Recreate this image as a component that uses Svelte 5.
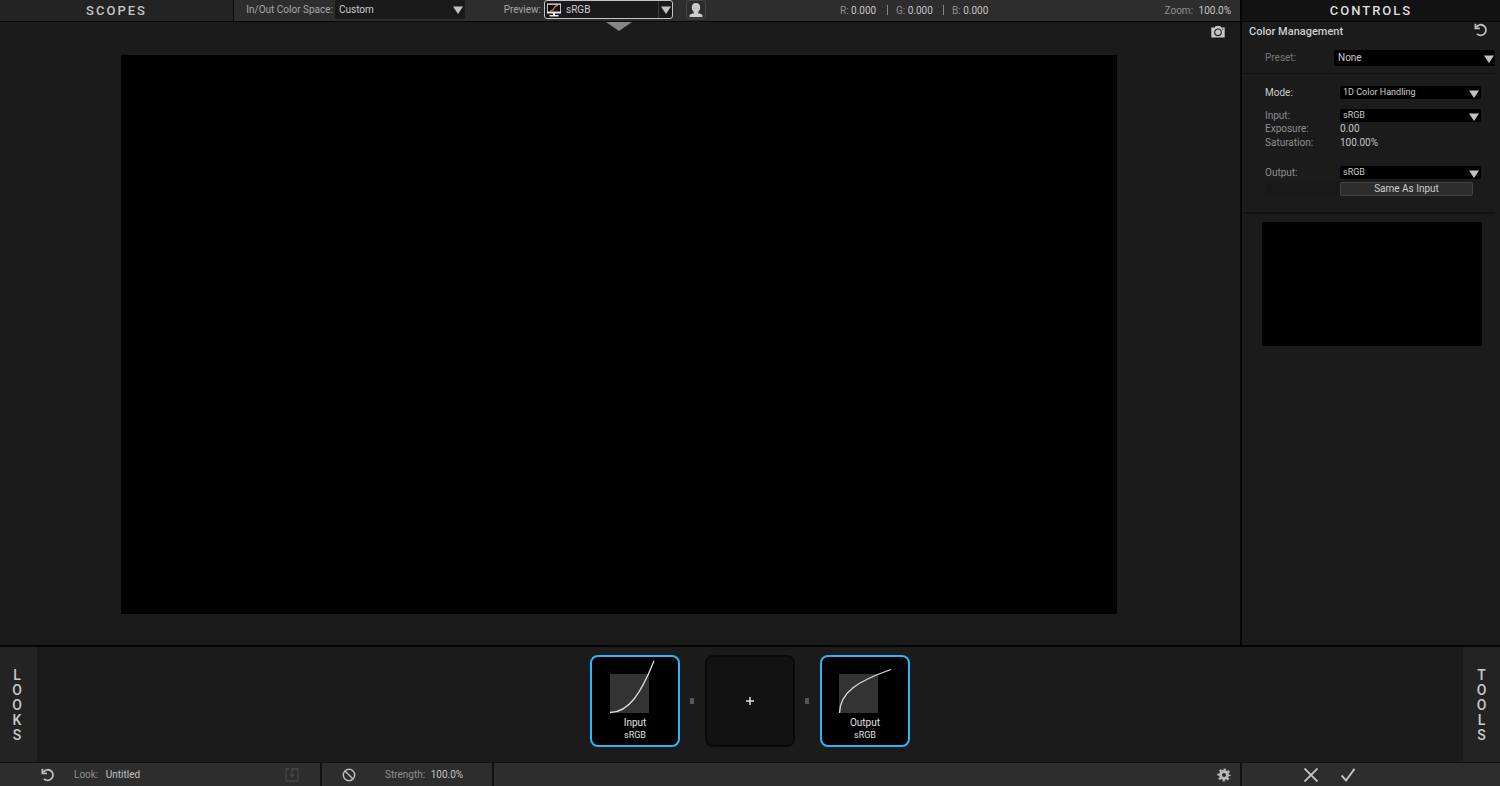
<script lang="ts">
  const colorSpaces = ['Custom', 'sRGB', 'Linear'];
  const profiles = ['sRGB', 'Rec. 709', 'Linear'];
  const modes = ['1D Color Handling', 'OCIO', 'ICC'];

  let colorSpace = $state('Custom');
  let preview = $state('sRGB');
  let preset = $state('None');
  let mode = $state('1D Color Handling');
  let input = $state('sRGB');
  let output = $state('sRGB');

  const pixel = [
    { name: 'R', value: '0.000' },
    { name: 'G', value: '0.000' },
    { name: 'B', value: '0.000' }
  ];

  const sameAsInput = () => {
    output = input;
  };
</script>

{#snippet arrow()}
  <svg class="arrow" viewBox="0 0 10 8" aria-hidden="true"><path d="M0 0.5h10L5 8z" /></svg>
{/snippet}

{#snippet resetIcon()}
  <svg class="reset-icon" viewBox="0 0 14 14" aria-hidden="true">
    <path d="M2.2 4.2A5.3 5.3 0 1 1 3 10.9" fill="none" stroke="currentColor" stroke-width="1.8" />
    <path d="M0.5 0.8v5.400h5.400v-1.700H2.300V0.8z" fill="currentColor" />
  </svg>
{/snippet}

<div class="app">
  <div class="upper">
    <main class="stage">
      <header class="topbar">
        <button class="tab scopes">SCOPES</button>
        <label class="label wide" for="space">In/Out Color Space:</label>
        <div class="select space">
          <select id="space" bind:value={colorSpace}>
            {#each colorSpaces as item}<option>{item}</option>{/each}
          </select>
          {@render arrow()}
        </div>
        <label class="label" for="preview">Preview:</label>
        <div class="select preview">
          <svg class="monitor" viewBox="0 0 14 14" aria-hidden="true">
            <path d="M0 0.5h14v10H0z" fill="#e8e8e8" />
            <path d="M0.8 1.800h12.400v6.700H0.8z" fill="#0c0c0c" />
            <path d="M3 8C8.500 8 5.500 2.500 11 2.300" fill="none" stroke="#c08428" stroke-width="1.200" />
            <path d="M6 10h2v2h3.500v1.500h-9V12H6z" fill="#e8e8e8" />
          </svg>
          <select id="preview" bind:value={preview}>
            {#each profiles as item}<option>{item}</option>{/each}
          </select>
          {@render arrow()}
        </div>
        <button class="proof" aria-label="Soft proof">
          <svg viewBox="0 0 16 16" aria-hidden="true">
            <path
              d="M8 1c2.8 0 4.2 1.8 4.2 4.2 0 2-0.7 3.700-2 4.800v1.200c1.600 0.400 3.800 0.900 4.300 2v1.800h-13v-1.800c0.500-1.100 2.700-1.600 4.300-2V10c-1.300-1.100-2-2.800-2-4.800C3.800 2.800 5.200 1 8 1z"
              fill="#cfcfcf"
            />
            <path d="M4 4h8M4 6.500h8M6.500 1v9M9.500 1v9" stroke="#b4b4b4" stroke-width="0.5" />
          </svg>
        </button>
        <div class="readout">
          {#each pixel as channel}
            <span class="channel">{channel.name}: <b>{channel.value}</b></span>
          {/each}
        </div>
        <div class="zoom">Zoom: <b>100.0%</b></div>
      </header>

      <section class="viewer">
        <button class="drawer" aria-label="Show preview options">
          <svg viewBox="0 0 26 9" aria-hidden="true"><path d="M0 0h26L13 9z" fill="#868686" /></svg>
        </button>
        <button class="snapshot" aria-label="Snapshot">
          <svg viewBox="0 0 14 12" aria-hidden="true">
            <path d="M0.300 1.500H4L4.600 0h4.800l0.600 1.500h3.700V11.500H0.300z" fill="#c8c8c8" />
            <circle cx="7" cy="6.300" r="3.300" fill="#c8c8c8" stroke="#222" stroke-width="1.200" />
            <circle cx="11.800" cy="3.200" r="0.600" fill="#222" />
          </svg>
        </button>
        <div class="canvas"></div>
      </section>
    </main>

    <aside class="controls">
      <button class="tab open">CONTROLS</button>
      <div class="title">
        <h2>Color Management</h2>
        <button aria-label="Reset tool">{@render resetIcon()}</button>
      </div>
      <div class="preset">
        <label for="preset">Preset:</label>
        <div class="select dark">
          <select id="preset" bind:value={preset}>
            <option>None</option>
          </select>
          {@render arrow()}
        </div>
      </div>
      <div class="fields">
        <div class="row spaced">
          <label class="bright" for="mode">Mode:</label>
          <div class="select dark small">
            <select id="mode" bind:value={mode}>
              {#each modes as item}<option>{item}</option>{/each}
            </select>
            {@render arrow()}
          </div>
        </div>
        <div class="row">
          <label for="input">Input:</label>
          <div class="select dark small">
            <select id="input" bind:value={input}>
              {#each profiles as item}<option>{item}</option>{/each}
            </select>
            {@render arrow()}
          </div>
        </div>
        <div class="row plain"><span>Exposure:</span><b>0.00</b></div>
        <div class="row plain last"><span>Saturation:</span><b>100.00%</b></div>
        <div class="row">
          <label for="output">Output:</label>
          <div class="select dark small">
            <select id="output" bind:value={output}>
              {#each profiles as item}<option>{item}</option>{/each}
            </select>
            {@render arrow()}
          </div>
        </div>
        <div class="row action">
          <span class="blank"></span>
          <button onclick={sameAsInput}>Same As Input</button>
        </div>
      </div>
      <div class="thumb"></div>
    </aside>
  </div>

  <section class="chain">
    <button class="side" aria-label="Looks">
      {#each 'LOOKS' as letter}<span>{letter}</span>{/each}
    </button>
    <div class="nodes">
      <button class="node active">
        <svg viewBox="0 0 86 58" aria-hidden="true">
          <path d="M18 17h39v39H18z" fill="#333" />
          <path d="M18 55.500C37 55.500 49 36 62 4" fill="none" stroke="#ddd" stroke-width="1.300" />
        </svg>
        <span>Input</span>
        <small>sRGB</small>
      </button>
      <i></i>
      <button class="node add" aria-label="Add tool">
        <svg viewBox="0 0 8 8" aria-hidden="true"><path d="M4 0v8M0 4h8" stroke="#ddd" stroke-width="1.500" /></svg>
      </button>
      <i></i>
      <button class="node active">
        <svg viewBox="0 0 86 58" aria-hidden="true">
          <path d="M17 17h39v39H17z" fill="#333" />
          <path d="M17.500 56C18 35 36 24 69 12.500" fill="none" stroke="#ddd" stroke-width="1.300" />
        </svg>
        <span>Output</span>
        <small>sRGB</small>
      </button>
    </div>
    <button class="side" aria-label="Tools">
      {#each 'TOOLS' as letter}<span>{letter}</span>{/each}
    </button>
  </section>

  <footer class="bottombar">
    <div class="look">
      <button aria-label="Reset look">{@render resetIcon()}</button>
      <span class="look-name">Look: <b>Untitled</b></span>
      <button class="save" aria-label="Save look" disabled>
        <svg viewBox="0 0 14 14" aria-hidden="true">
          <path d="M4 1H1v12h12V1H7v7" fill="none" stroke="#444" stroke-width="1.300" />
          <path d="M4 6.500h6L7 10z" fill="#444" />
        </svg>
      </button>
    </div>
    <div class="strength">
      <button aria-label="Bypass look">
        <svg viewBox="0 0 14 14" aria-hidden="true">
          <circle cx="7" cy="7" r="5.700" fill="none" stroke="#bbb" stroke-width="1.500" />
          <path d="M3 3l8 8" stroke="#bbb" stroke-width="1.500" />
        </svg>
      </button>
      <span>Strength: <b>100.0%</b></span>
    </div>
    <div class="options">
      <button aria-label="Settings">
        <svg viewBox="0 0 14 14" aria-hidden="true">
          <circle cx="7" cy="7" r="3.500" fill="none" stroke="#bbb" stroke-width="2.800" />
          <circle cx="7" cy="7" r="5.400" fill="none" stroke="#bbb" stroke-width="2.400" stroke-dasharray="2.120 2.120" stroke-dashoffset="1.060" />
        </svg>
      </button>
    </div>
    <div class="confirm">
      <button aria-label="Cancel">
        <svg viewBox="0 0 14 14" aria-hidden="true"><path d="M0.500 0.500l13 13M13.500 0.500l-13 13" stroke="#c4c4c4" stroke-width="1.900" /></svg>
      </button>
      <button aria-label="Apply">
        <svg viewBox="0 0 14 14" aria-hidden="true"><path d="M0.500 7.500l4.500 5L13.500 0.800" fill="none" stroke="#c4c4c4" stroke-width="1.900" /></svg>
      </button>
    </div>
  </footer>
</div>

<style>
  :global(body) {
    margin: 0;
    background: #1b1b1b;
  }

  .app {
    display: flex;
    flex-direction: column;
    min-height: 100vh;
    background: #1b1b1b;
    color: #8f8f8f;
    font: 10px/14px Roboto, sans-serif;
  }

  .app * {
    box-sizing: border-box;
  }

  b {
    color: #c4c4c4;
    font-weight: 400;
  }

  svg {
    display: block;
  }

  button {
    display: flex;
    align-items: center;
    justify-content: center;
    padding: 0;
    border: 0;
    background: none;
    color: #bdbdbd;
    font: inherit;
    cursor: pointer;
  }

  .upper {
    display: flex;
    flex: 1;
    border-bottom: 2px solid #050505;
  }

  .stage {
    display: flex;
    flex: 1;
    flex-direction: column;
  }

  .topbar {
    display: flex;
    height: 22px;
    border-bottom: 1px solid #0a0a0a;
    background: #2d2d2d;
  }

  .tab {
    height: 21px;
    color: #c4c4c4;
    font-size: 13px;
    font-weight: 500;
    letter-spacing: 2px;
  }

  .scopes {
    width: 234px;
    border-right: 1px solid #0a0a0a;
    background: #232323;
  }

  .label {
    width: 79px;
    padding-right: 3px;
    color: #a8a8a8;
    line-height: 19px;
    text-align: right;
  }

  .label.wide {
    width: 101px;
    padding-right: 2px;
  }

  .select {
    position: relative;
    display: flex;
    height: 19px;
    border-radius: 2px;
    background: #1a1a1a;
  }

  select {
    flex: 1;
    min-width: 0;
    padding: 0 16px 0 4px;
    border: 0;
    outline: 0;
    appearance: none;
    background: none;
    color: #cdcdcd;
    font: inherit;
  }

  .arrow {
    position: absolute;
    right: 2px;
    bottom: 5px;
    width: 10px;
    height: 8px;
    fill: #c2c2c2;
    pointer-events: none;
  }

  .space {
    width: 130px;
  }

  .preview {
    width: 129px;
    align-items: center;
    border: 1px solid #c4c4c4;
    border-radius: 3px;
  }

  .preview select {
    align-self: stretch;
    margin-right: 13px;
    padding-left: 5px;
    border-right: 1px solid #3a3a3a;
  }

  .preview .arrow {
    right: 1px;
    bottom: 4px;
  }

  .monitor {
    width: 14px;
    height: 14px;
    margin-left: 2px;
  }

  .proof {
    width: 20px;
    height: 19px;
    margin-left: 13px;
    border: 1px solid #444;
    border-radius: 2px;
  }

  .proof svg {
    width: 16px;
    height: 16px;
  }

  .readout {
    display: flex;
    margin-left: 134px;
    line-height: 21px;
  }

  .channel {
    position: relative;
    width: 56px;
  }

  .channel:not(:last-child)::after {
    content: '';
    position: absolute;
    top: 5px;
    right: 8px;
    width: 1px;
    height: 10px;
    background: #858585;
  }

  .zoom {
    margin-left: auto;
    padding-right: 9px;
    line-height: 21px;
  }

  .zoom b {
    margin-left: 3px;
  }

  .viewer {
    position: relative;
    display: flex;
    flex: 1;
    padding: 33px 123px 31px 121px;
  }

  .canvas {
    flex: 1;
    background: #000;
  }

  .drawer {
    position: absolute;
    top: 0;
    left: 50%;
    width: 26px;
    margin-left: -14px;
  }

  .drawer svg {
    width: 26px;
    height: 9px;
  }

  .snapshot {
    position: absolute;
    top: 4px;
    right: 15px;
  }

  .snapshot svg {
    width: 14px;
    height: 12px;
  }

  .controls {
    width: 260px;
    border-left: 2px solid #050505;
  }

  .open {
    width: 100%;
    height: 22px;
    border-bottom: 1px solid #050505;
    background: #121212;
    color: #dedede;
  }

  .title {
    display: flex;
    align-items: flex-start;
    justify-content: space-between;
    height: 20px;
    padding: 1px 12px 0 7px;
  }

  h2 {
    margin: 0;
    color: #cdcdcd;
    font-size: 11px;
    font-weight: 500;
    line-height: 17px;
  }

  .reset-icon {
    width: 14px;
    height: 14px;
  }

  .preset {
    display: flex;
    align-items: center;
    height: 32px;
    margin-right: 5px;
    padding-left: 23px;
    border-bottom: 1px solid #111;
    color: #777;
  }

  .preset label {
    width: 69px;
  }

  .preset .select {
    flex: 1;
    height: 16px;
  }

  .preset .arrow {
    right: 1px;
    bottom: 3px;
  }

  .dark {
    background: #000;
  }

  .fields {
    margin-right: 5px;
    padding: 12px 14px 16px 23px;
    border-bottom: 2px solid #121212;
  }

  .row {
    display: flex;
    align-items: center;
    height: 13px;
    line-height: 12px;
  }

  .row.spaced {
    margin-bottom: 10px;
  }

  .row.plain {
    height: 14px;
  }

  .row.last {
    margin-bottom: 16px;
  }

  .row > :first-child {
    width: 75px;
  }

  .bright {
    color: #cdcdcd;
  }

  .small {
    flex: 1;
    height: 13px;
    font-size: 9px;
  }

  .small select {
    padding: 0 16px 1px 3px;
  }

  .dark.small .arrow {
    bottom: 1px;
  }

  .row.action {
    height: 14px;
    margin-top: 3px;
    padding-right: 8px;
  }

  .blank {
    height: 12px;
    background: #181818;
  }

  .action button {
    flex: 1;
    height: 14px;
    border: 1px solid #444;
    border-radius: 2px;
    background: #2d2d2d;
    color: #cdcdcd;
  }

  .thumb {
    aspect-ratio: 220 / 124;
    margin: 8px 18px 0 20px;
    background: #000;
  }

  .chain {
    display: flex;
    height: 115px;
  }

  .side {
    flex-direction: column;
    width: 37px;
    padding: 2px 3px 0 0;
    background: #232323;
    color: #c8c8c8;
    font-size: 14px;
    font-weight: 500;
    line-height: 15px;
  }

  .side:last-child {
    padding-right: 0;
  }

  .nodes {
    display: flex;
    flex: 1;
    align-items: center;
    justify-content: center;
    padding-bottom: 7px;
  }

  .node {
    flex-direction: column;
    justify-content: flex-start;
    width: 90px;
    height: 92px;
    border: 2px solid #0a0a0a;
    border-radius: 8px;
    background: #121212;
    color: #e0e0e0;
  }

  .active {
    border-color: #2fb4f5;
    background: #000;
  }

  .active svg {
    width: 86px;
    height: 58px;
  }

  .node span {
    line-height: 15px;
  }

  .node small {
    font-size: 9px;
    line-height: 10px;
  }

  .node.add {
    justify-content: center;
  }

  .add svg {
    width: 8px;
    height: 8px;
  }

  .nodes i {
    width: 4px;
    height: 6px;
    margin: 0 11px 0 10px;
    background: #555;
  }

  .bottombar {
    display: flex;
    height: 24px;
    border-top: 1px solid #111;
    background: #2d2d2d;
  }

  .bottombar > div {
    display: flex;
    align-items: center;
  }

  .bottombar svg {
    width: 14px;
    height: 14px;
  }

  .look {
    width: 322px;
    padding: 0 21px 0 41px;
    border-right: 2px solid #111;
  }

  .look-name {
    margin-left: 19px;
  }

  .look-name b {
    margin-left: 5px;
  }

  .save {
    margin-left: auto;
  }

  .strength {
    width: 172px;
    padding-left: 20px;
    border-right: 2px solid #111;
  }

  .strength span {
    margin-left: 29px;
  }

  .strength b {
    margin-left: 3px;
  }

  .options {
    flex: 1;
    justify-content: flex-end;
    padding-right: 9px;
  }

  .confirm {
    gap: 23px;
    width: 260px;
    padding-left: 62px;
    border-left: 2px solid #111;
  }
</style>
